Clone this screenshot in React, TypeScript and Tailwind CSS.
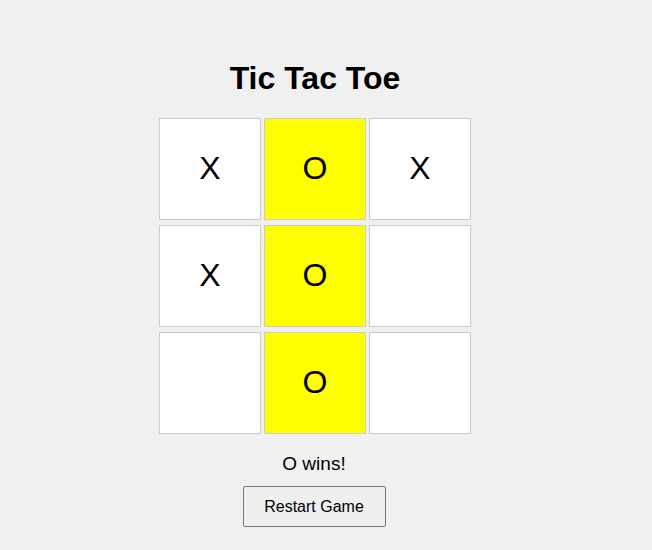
const board = ["X", "O", "X", "X", "O", "", "", "O", ""]
const winning = [1, 4, 7]

export default function App() {
  return (
    <div
      className="min-h-[550px] w-full bg-[#f0f0f0] text-black"
      style={{ fontFamily: '"Liberation Sans", Arial, sans-serif' }}
    >
      <div className="flex w-[630px] flex-col items-center pt-[60px]">
        <h1 className="mb-[21px] text-[32px] font-bold leading-[37px]">Tic Tac Toe</h1>

        <div className="grid grid-cols-[repeat(3,102px)] gap-x-[3px] gap-y-[5px]">
          {board.map((cell, index) => (
            <div
              key={index}
              className={`flex h-[102px] w-[102px] items-center justify-center border border-[#cccccc] pb-[3px] text-[32px] ${
                winning.includes(index) ? "bg-[#ffff00]" : "bg-white"
              }`}
            >
              {cell}
            </div>
          ))}
        </div>

        <p className="mt-[19px] mr-[2px] text-[19px] leading-[22px]">O wins!</p>

        <button className="mt-[11px] mr-[2px] w-[143px] rounded-[2px] border border-[#767676] bg-[#efefef] py-[10px] text-[16px] leading-[19px]">
          Restart Game
        </button>
      </div>
    </div>
  )
}
